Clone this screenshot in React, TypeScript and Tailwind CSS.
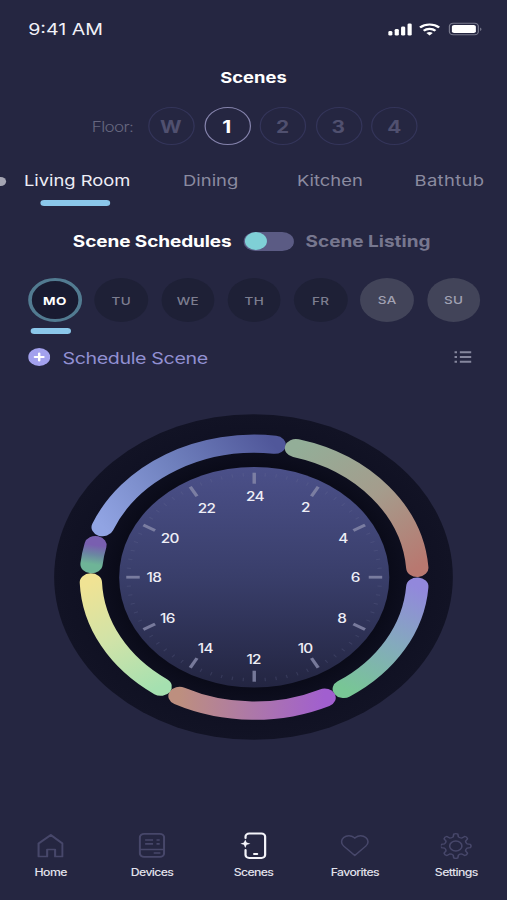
import clsx from "clsx";

const floors = ["W", "1", "2", "3", "4"];

const days = [
  { name: "MO", kind: "active" },
  { name: "TU", kind: "week" },
  { name: "WE", kind: "week" },
  { name: "TH", kind: "week" },
  { name: "FR", kind: "week" },
  { name: "SA", kind: "weekend" },
  { name: "SU", kind: "weekend" },
];

// Angles are in degrees, clockwise from the top of the dial
const segments = [
  { id: "night", from: 292, to: 367.2, colors: ["#91a4e3", "#6f80bd", "#50579a"] },
  { id: "morning", from: 14.8, to: 86, colors: ["#93ae98", "#a59c8c", "#b87870"] },
  { id: "noon", from: 94, to: 146.8, colors: ["#9288dc", "#84aabd", "#78c695"] },
  { id: "afternoon", from: 154.5, to: 207.2, colors: ["#a15fcf", "#ad78a8", "#bd8f7f"] },
  { id: "evening", from: 214.9, to: 267.8, colors: ["#a5e0b0", "#d0e3a8", "#f0e394"] },
  { id: "dusk", from: 275.6, to: 283.9, colors: ["#6eb497", "#6b87a2", "#795fb0"] },
];

const hours = [
  { h: 24, x: 0.6, y: -81 },
  { h: 2, x: 41.8, y: -70 },
  { h: 4, x: 72.5, y: -39 },
  { h: 6, x: 82.5, y: 0 },
  { h: 8, x: 71.5, y: 41 },
  { h: 10, x: 41.5, y: 71 },
  { h: 12, x: -0.5, y: 82 },
  { h: 14, x: -40, y: 71 },
  { h: 16, x: -71, y: 41 },
  { h: 18, x: -82, y: 0 },
  { h: 20, x: -69, y: -39 },
  { h: 22, x: -39, y: -69 },
];

function point(angle: number, r: number) {
  const a = (angle * Math.PI) / 180;
  return { x: r * Math.sin(a), y: -r * Math.cos(a) };
}

function Dial() {
  return (
    <svg width="326" height="326" viewBox="-163 -163 326 326">
      <defs>
        <linearGradient id="face" x1="0" y1="0" x2="0" y2="1">
          <stop offset="0" stopColor="#4b5089" />
          <stop offset="0.5" stopColor="#393e6a" />
          <stop offset="1" stopColor="#232541" />
        </linearGradient>
        <radialGradient id="rim" cx="0" cy="0" r="163" gradientUnits="userSpaceOnUse">
          <stop offset="0.68" stopColor="#0a0b19" />
          <stop offset="0.85" stopColor="#101123" />
          <stop offset="1" stopColor="#121325" />
        </radialGradient>
        {segments.map((s) => {
          const a = point(s.from, 133.5);
          const b = point(s.to, 133.5);
          return (
            <linearGradient key={s.id} id={s.id} gradientUnits="userSpaceOnUse" x1={a.x} y1={a.y} x2={b.x} y2={b.y}>
              <stop offset="0" stopColor={s.colors[0]} />
              <stop offset="0.5" stopColor={s.colors[1]} />
              <stop offset="1" stopColor={s.colors[2]} />
            </linearGradient>
          );
        })}
      </defs>

      <circle r="162.8" fill="url(#rim)" />

      <g transform="translate(.6 .2)">
        <circle r="110.3" fill="url(#face)" />

        {segments.map((s) => {
          const a = point(s.from, 133.5);
          const b = point(s.to, 133.5);
          return (
            <path
              key={s.id}
              d={`M${a.x} ${a.y}A133.5 133.5 0 0 1 ${b.x} ${b.y}`}
              fill="none"
              stroke={`url(#${s.id})`}
              strokeWidth="18.2"
              strokeLinecap="round"
            />
          );
        })}

        {Array.from({ length: 72 }, (_, i) => {
          const major = i % 6 === 0;
          return (
            <line
              key={i}
              y1="-104.5"
              y2={major ? -93.5 : -101}
              transform={`rotate(${i * 5})`}
              stroke={major ? "#8587a8" : "#6b6e99"}
              strokeOpacity={major ? 0.85 : 0.25}
              strokeWidth={major ? 2.8 : 1}
            />
          );
        })}

        {hours.map(({ h, x, y }) => (
          <text key={h} x={x} y={y + 4.5} textAnchor="middle" fill="#eeeef6" className="text-[12.5px] font-medium tracking-[-0.05em]">
            {h}
          </text>
        ))}
      </g>
    </svg>
  );
}

function HomeIcon() {
  return (
    <svg width="22" height="28" viewBox="0 0 22 28" fill="none" stroke="#47476a" strokeWidth="1.7" strokeLinejoin="round">
      <path d="M1.500 11.500 11.500 3l9.500 8.500V24.500H15V17.500H8.500v7h-7z" />
    </svg>
  );
}

function DevicesIcon() {
  return (
    <svg width="22" height="28" viewBox="0 0 22 28" fill="none" stroke="#47476a" strokeWidth="1.7">
      <rect x="1.2" y="1.800" width="19.800" height="23" rx="3.500" />
      <path d="M1.200 17.500h19.800M5.500 8h6.500M5.500 11.800h6.500M14.800 8h2.600M14.800 11.800h2.600M12.500 21h5.500" />
    </svg>
  );
}

function ScenesIcon() {
  return (
    <svg width="22" height="28" viewBox="0 0 22 28" fill="none" stroke="#f4f4fa" strokeWidth="1.8" strokeLinecap="round">
      <path d="M4.500 6V4.500a3 3 0 0 1 3-3h10a3 3 0 0 1 3 3v18.500a3 3 0 0 1-3 3h-10a3 3 0 0 1-3-3V18" />
      <path d="M11.500 22h2.500" />
      <path d="M4.300 7.500 5.400 10.600 8.500 11.700 5.400 12.800 4.300 16 3.200 12.800.3 11.700 3.200 10.600z" fill="#f4f4fa" stroke="none" />
    </svg>
  );
}

function HeartIcon() {
  return (
    <svg width="24" height="28" viewBox="0 0 24 28" fill="none" stroke="#47476a" strokeWidth="1.3" strokeLinejoin="round">
      <path d="M11.700 23.500 2.700 14.100a6 6 0 0 1 0-8.600 5.900 5.900 0 0 1 8.400 0l.6.700.6-.7a5.900 5.900 0 0 1 8.400 0 6 6 0 0 1 0 8.600z" />
    </svg>
  );
}

function GearIcon() {
  // Eight rounded teeth around the body
  const d = Array.from({ length: 8 }, (_, i) => {
    const c = i * 45;
    const p = [point(c - 13, 9.4), point(c - 8, 12), point(c + 8, 12), point(c + 13, 9.4), point(c + 32, 9.4)];
    return `${i ? "L" : "M"}${p[0].x} ${p[0].y}L${p[1].x} ${p[1].y}A3 3 0 0 1 ${p[2].x} ${p[2].y}L${p[3].x} ${p[3].y}A4 4 0 0 0 ${p[4].x} ${p[4].y}`;
  }).join("");
  return (
    <svg width="26" height="28" viewBox="-12.200 -14 26 28" fill="none" stroke="#47476a" strokeWidth="1.3" strokeLinejoin="round">
      <path d={d + "Z"} />
      <circle r="5" />
    </svg>
  );
}

const nav = [
  { label: "Home", Icon: HomeIcon },
  { label: "Devices", Icon: DevicesIcon },
  { label: "Scenes", Icon: ScenesIcon },
  { label: "Favorites", Icon: HeartIcon },
  { label: "Settings", Icon: GearIcon },
];

function StatusBar() {
  return (
    <header className="flex h-[57px] items-center justify-between pl-[23px] pr-5 text-[#f1f1f8]">
      <span className="text-base">9:41 AM</span>
      <svg width="77" height="14" viewBox="0 0 77 14" fill="#fff">
        <rect x="0" y="9" width="3.400" height="4.500" rx="1.300" />
        <rect x="5.300" y="7" width="3.400" height="6.500" rx="1.300" />
        <rect x="10.500" y="4.500" width="3.400" height="9" rx="1.300" />
        <rect x="15.800" y="1.500" width="3.400" height="12" rx="1.300" />
        <g fill="none" stroke="#fff" strokeWidth="2.100">
          <path d="M26 5.600a11.500 11.500 0 0 1 15.600 0" />
          <path d="M29 8.800a7 7 0 0 1 9.600 0" />
        </g>
        <path d="M31.200 11a4 4 0 0 1 5.200 0L33.800 13.600z" />
        <rect x="50" y="1.300" width="23.600" height="11.500" rx="3" fill="none" stroke="#77788c" />
        <rect x="52" y="3" width="19.600" height="8" rx="1.800" />
        <path d="M75 5.500c1.600.5 1.600 3 0 3.600z" fill="#77788c" />
      </svg>
    </header>
  );
}

export default function App() {
  return (
    <div className="h-[900px] w-[507px] overflow-hidden bg-[#252641]">
      <div className="flex h-[900px] w-[414px] origin-left scale-x-[1.2246] flex-col font-['Inter',sans-serif]">
        <StatusBar />

        <h1 className="flex h-10 items-center justify-center pt-0.5 text-[15px] font-bold text-white">Scenes</h1>

        <div className="mt-2.5 flex h-[38px] items-center pl-[75px]">
          <span className="w-[46px] pt-0.5 text-sm font-light tracking-[-0.04em] text-[#66667f]">Floor:</span>
          <div className="flex gap-[7.600px]">
            {floors.map((f) => (
              <button
                key={f}
                className={clsx(
                  "flex size-[38px] items-center justify-center rounded-full border pr-px pt-[3px] text-[17px] font-bold",
                  f === "1" ? "border-[#8583ac] pr-[3px] text-white" : "border-[#34355a] text-[#50506f]"
                )}
              >
                {f}
              </button>
            ))}
          </div>
        </div>

        <nav className="mt-6 flex h-6 items-center pt-px text-[15px] text-[#8b8ba0]">
          <span className="-ml-1 size-[9px] rounded-full bg-[#a5a5b3]" />
          <span className="ml-[14.500px] w-[130px] whitespace-nowrap text-[#eeeef6]">Living Room</span>
          <span className="w-[93px]">Dining</span>
          <span className="w-[96px]">Kitchen</span>
          <span className="tracking-[0.02em]">Bathtub</span>
        </nav>
        <div className="ml-[32.500px] mt-[7px] h-1.5 w-[57px] shrink-0 rounded-full bg-[#8bc7ea]" />

        <div className="mt-[25px] flex h-5 items-center whitespace-nowrap pl-[59.500px] text-[15.500px] font-bold">
          <span className="w-[139.500px] pt-px tracking-[-0.005em] text-white">Scene Schedules</span>
          <div className="flex h-[19px] w-[41px] items-center rounded-full bg-[#5b5b84] px-px">
            <span className="size-[17.500px] rounded-full bg-[#7fd0d6]" />
          </div>
          <span className="ml-[9.500px] pt-px text-[#77778f]">Scene Listing</span>
        </div>

        <div className="mt-[27px] flex gap-[10.800px] pl-[23px]">
          {days.map(({ name, kind }) => (
            <button
              key={name}
              className={clsx(
                "flex h-11 w-[43.500px] shrink-0 items-center justify-center rounded-full text-[11px] tracking-wide",
                kind === "active" && "border-[3px] border-[#527b91] bg-[#191b31] pt-[3px] font-bold text-white",
                kind === "week" && "bg-[#1e2036] pt-[3px] font-medium text-[#7d7e90]",
                kind === "weekend" && "bg-[#424459] pt-px font-medium text-[#a1a2b3]"
              )}
            >
              {name}
            </button>
          ))}
        </div>
        <div className="ml-[25px] mt-1.5 h-1.5 w-[33px] shrink-0 rounded-full bg-[#8bc7ea]" />

        <div className="mt-3.5 flex h-[18px] items-center pl-[23px] pr-[29px]">
          <svg width="18" height="18" viewBox="0 0 18 18">
            <circle cx="9" cy="9" r="9" fill="#a3a1ee" />
            <path d="M9 5.500v7M5.500 9h7" stroke="#fff" strokeWidth="2" strokeLinecap="round" />
          </svg>
          <span className="ml-2.5 pt-px text-base tracking-[-0.018em] text-[#9290d2]">Schedule Scene</span>
          <svg className="ml-auto" width="14" height="12" viewBox="0 0 14 12" stroke="#85869d" strokeWidth="2">
            <path d="M0 1.200h2.200M4.500 1.200H14M0 6h2.200M4.500 6H14M0 10.800h2.200M4.500 10.800H14" />
          </svg>
        </div>

        <div className="mt-12 flex h-[326px] shrink-0 justify-center">
          <Dial />
        </div>

        <footer className="mt-[92px] grid grid-cols-5">
          {nav.map(({ label, Icon }) => (
            <div key={label} className="flex flex-col items-center">
              <Icon />
              <span className="mt-1 text-[10px] font-medium leading-4 tracking-[-0.05em] text-[#e2e2ec]">{label}</span>
            </div>
          ))}
        </footer>
      </div>
    </div>
  );
}
